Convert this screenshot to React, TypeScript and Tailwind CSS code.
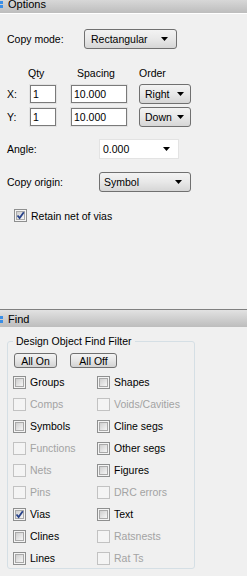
import type { ReactNode } from "react";

const FONT = "font-['Liberation_Sans',Arial,sans-serif] text-[10.5px] leading-[12px] text-black";

const FILTERS: { label: string; on?: boolean; disabled?: boolean }[][] = [
  [{ label: "Groups" }, { label: "Shapes" }],
  [{ label: "Comps", disabled: true }, { label: "Voids/Cavities", disabled: true }],
  [{ label: "Symbols" }, { label: "Cline segs" }],
  [{ label: "Functions", disabled: true }, { label: "Other segs" }],
  [{ label: "Nets", disabled: true }, { label: "Figures" }],
  [{ label: "Pins", disabled: true }, { label: "DRC errors", disabled: true }],
  [{ label: "Vias", on: true }, { label: "Text" }],
  [{ label: "Clines" }, { label: "Ratsnests", disabled: true }],
  [{ label: "Lines" }, { label: "Rat Ts", disabled: true }],
];

function PanelHeader({ title, className = "" }: { title: string; className?: string }) {
  return (
    <div
      className={`flex h-[18px] shrink-0 items-center gap-[5px] border-t border-[#808080] bg-gradient-to-b from-[#e2e2e2] to-[#bdbdbd] ${className}`}
    >
      {/* blue grip */}
      <div className="flex flex-col gap-[1px] pt-[1px]">
        <i className="block h-[3px] w-[3px] bg-[#3a8ee6]" />
        <i className="block h-[3px] w-[3px] bg-[#3a8ee6]" />
      </div>
      <span className="text-[11px] leading-[12px]">{title}</span>
    </div>
  );
}

function Arrow() {
  return (
    <svg width="7" height="4" viewBox="0 0 7 4" className="shrink-0">
      <polygon points="0,0 7,0 3.5,4" fill="#000" />
    </svg>
  );
}

function Dropdown({ value, className = "" }: { value: string; className?: string }) {
  return (
    <div
      className={`flex h-[20px] items-center justify-between rounded-[3px] border border-[#707070] bg-gradient-to-b from-[#f3f3f3] via-[#e8e8e8] to-[#d6d6d6] pl-[6px] pr-[8px] ${className}`}
    >
      <span>{value}</span>
      <Arrow />
    </div>
  );
}

function TextBox({ value, className = "" }: { value: string; className?: string }) {
  return (
    <div
      className={`flex h-[20px] items-center border border-[#e2e2e2] bg-white pl-[3px] shadow-[inset_0_0_0_1px_#7a7a7a] ${className}`}
    >
      {value}
    </div>
  );
}

function Check({ on, disabled }: { on?: boolean; disabled?: boolean }) {
  return (
    <div
      className={`grid h-[13px] w-[13px] shrink-0 place-items-center border ${
        disabled ? "border-[#c2c2c2] bg-[#f4f4f4]" : "border-[#8e8f8f] bg-[#f4f4f4]"
      }`}
    >
      {!disabled && (
        <div className="relative h-[9px] w-[9px] border border-[#a9a9a9] bg-gradient-to-br from-[#cfcfcf] to-[#f6f6f6]">
          {on && (
            <svg width="11" height="11" viewBox="0 0 11 11" className="absolute -left-[2px] -top-[2px]">
              <path d="M2.5 5.5 L4.6 8 L8.8 2.2" fill="none" stroke="#27428a" strokeWidth="1.8" />
            </svg>
          )}
        </div>
      )}
    </div>
  );
}

function CheckRow({ label, on, disabled }: { label: string; on?: boolean; disabled?: boolean }) {
  return (
    <div className="flex items-center gap-[4px]">
      <Check on={on} disabled={disabled} />
      <span className={disabled ? "text-[#a3a3a3]" : ""}>{label}</span>
    </div>
  );
}

function Row({ children, className = "" }: { children: ReactNode; className?: string }) {
  return <div className={`flex items-center ${className}`}>{children}</div>;
}

function Button({ children, className = "" }: { children: ReactNode; className?: string }) {
  return (
    <div
      className={`flex h-[15px] items-center justify-center rounded-[3px] border border-[#707070] bg-gradient-to-b from-[#f3f3f3] via-[#e6e6e6] to-[#d2d2d2] ${className}`}
    >
      {children}
    </div>
  );
}

export default function App() {
  return (
    <div className={`flex h-[576px] w-[247px] flex-col overflow-hidden bg-[#f0f0f0] ${FONT}`}>
      {/* Options */}
      <PanelHeader title="Options" className="-mt-[5px] border-t-0" />
      <div className="h-[296px] shrink-0 border-t border-white pl-[7px]">
        <Row className="mt-[15px]">
          <span className="w-[77px]">Copy mode:</span>
          <Dropdown value="Rectangular" className="w-[93px]" />
        </Row>

        <Row className="mt-[17px] h-[14px]">
          <span className="ml-[21px] w-[49px]">Qty</span>
          <span className="w-[62px]">Spacing</span>
          <span>Order</span>
        </Row>

        {[
          ["X:", "Right"],
          ["Y:", "Down"],
        ].map(([axis, order], i) => (
          <Row key={axis} className={i === 0 ? "mt-[4px]" : "mt-[3px]"}>
            <span className="w-[22px]">{axis}</span>
            <TextBox value="1" className="w-[28px]" />
            <TextBox value="10.000" className="ml-[13px] w-[58px]" />
            <Dropdown value={order} className="ml-[11px] w-[52px] !pl-[5px] !pr-[6px]" />
          </Row>
        ))}

        <Row className="mt-[12px]">
          <span className="w-[92px]">Angle:</span>
          <div className="flex h-[20px] w-[80px] items-center justify-between border border-[#e3e3e3] bg-white pl-[3px] pr-[8px]">
            <span>0.000</span>
            <Arrow />
          </div>
        </Row>

        <Row className="mt-[13px]">
          <span className="w-[92px]">Copy origin:</span>
          <Dropdown value="Symbol" className="w-[92px] !pl-[4px]" />
        </Row>

        <div className="ml-[7px] mt-[17px]">
          <CheckRow label="Retain net of vias" on />
        </div>
      </div>

      {/* Find */}
      <PanelHeader title="Find" />
      <div className="pl-[7px] pt-[14px]">
        <div className="relative h-[228px] w-[188px] rounded-[3px] border border-[#d5dfe5] pl-[5px] pt-[11px]">
          <span className="absolute -top-[7px] left-[5px] bg-[#f0f0f0] px-[3px]">Design Object Find Filter</span>
          <div className="ml-[1px] flex gap-[13px]">
            <Button className="w-[43px]">All On</Button>
            <Button className="w-[47px]">All Off</Button>
          </div>
          <div className="mt-[3px] grid grid-cols-[84px_1fr] auto-rows-[22px] items-center">
            {FILTERS.flat().map((f) => (
              <CheckRow key={f.label} label={f.label} on={f.on} disabled={f.disabled} />
            ))}
          </div>
        </div>
      </div>
    </div>
  );
}
